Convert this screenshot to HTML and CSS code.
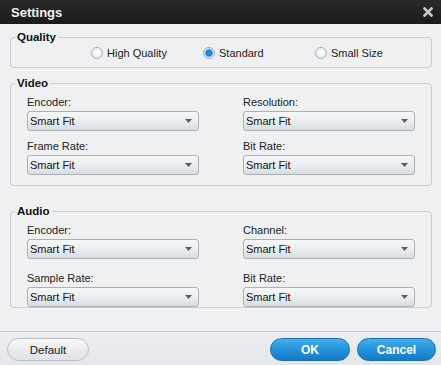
FILE: index.html
```html
<!DOCTYPE html>
<html lang="en">
<head>
  <meta charset="UTF-8">
  <title>Settings</title>
  <link rel="stylesheet" href="styles.css">
</head>
<body>
  <div class="dialog">
    <div class="titlebar">
      <span class="title">Settings</span>
      <svg class="close" width="10" height="10" viewBox="0 0 10 10">
        <path d="M1.5 1.5 L8.5 8.5 M8.5 1.5 L1.5 8.5" stroke="#c9c9c9" stroke-width="2.6" stroke-linecap="square"/>
      </svg>
    </div>

    <div class="content">
      <fieldset class="group quality">
        <legend>Quality</legend>
        <div class="radio-row">
          <label class="radio"><span class="dot"></span>High Quality</label>
          <label class="radio"><span class="dot checked"></span>Standard</label>
          <label class="radio"><span class="dot"></span>Small Size</label>
        </div>
      </fieldset>

      <fieldset class="group video">
        <legend>Video</legend>
        <div class="fields">
          <div class="field">
            <div class="field-label">Encoder:</div>
            <div class="select"><span>Smart Fit</span><svg width="7" height="4" viewBox="0 0 7 4"><polygon points="0,0 7,0 3.5,4" fill="#5a5e63"/></svg></div>
          </div>
          <div class="field">
            <div class="field-label">Resolution:</div>
            <div class="select"><span>Smart Fit</span><svg width="7" height="4" viewBox="0 0 7 4"><polygon points="0,0 7,0 3.5,4" fill="#5a5e63"/></svg></div>
          </div>
          <div class="field">
            <div class="field-label">Frame Rate:</div>
            <div class="select"><span>Smart Fit</span><svg width="7" height="4" viewBox="0 0 7 4"><polygon points="0,0 7,0 3.5,4" fill="#5a5e63"/></svg></div>
          </div>
          <div class="field">
            <div class="field-label">Bit Rate:</div>
            <div class="select"><span>Smart Fit</span><svg width="7" height="4" viewBox="0 0 7 4"><polygon points="0,0 7,0 3.5,4" fill="#5a5e63"/></svg></div>
          </div>
        </div>
      </fieldset>

      <fieldset class="group audio">
        <legend>Audio</legend>
        <div class="fields">
          <div class="field">
            <div class="field-label">Encoder:</div>
            <div class="select"><span>Smart Fit</span><svg width="7" height="4" viewBox="0 0 7 4"><polygon points="0,0 7,0 3.5,4" fill="#5a5e63"/></svg></div>
          </div>
          <div class="field">
            <div class="field-label">Channel:</div>
            <div class="select"><span>Smart Fit</span><svg width="7" height="4" viewBox="0 0 7 4"><polygon points="0,0 7,0 3.5,4" fill="#5a5e63"/></svg></div>
          </div>
          <div class="field">
            <div class="field-label">Sample Rate:</div>
            <div class="select"><span>Smart Fit</span><svg width="7" height="4" viewBox="0 0 7 4"><polygon points="0,0 7,0 3.5,4" fill="#5a5e63"/></svg></div>
          </div>
          <div class="field">
            <div class="field-label">Bit Rate:</div>
            <div class="select"><span>Smart Fit</span><svg width="7" height="4" viewBox="0 0 7 4"><polygon points="0,0 7,0 3.5,4" fill="#5a5e63"/></svg></div>
          </div>
        </div>
      </fieldset>
    </div>

    <div class="footer">
      <button class="btn btn-default">Default</button>
      <div class="actions">
        <button class="btn btn-blue">OK</button>
        <button class="btn btn-blue">Cancel</button>
      </div>
    </div>
  </div>
</body>
</html>
```

FILE: styles.css
```css
body {
  margin: 0;
  font-family: "Liberation Sans", Arial, sans-serif;
  font-size: 11px;
  color: #1a1a1a;
  background: #eef0f2;
}
.dialog {
  width: 441px;
  height: 365px;
  display: flex;
  flex-direction: column;
  background: #eef0f2;
}
.titlebar {
  height: 24px;
  flex: none;
  display: flex;
  align-items: center;
  justify-content: space-between;
  padding: 0 8px 0 11px;
  background: linear-gradient(#2a2a2a, #1b1b1b);
}
.title {
  color: #f2f2f2;
  font-weight: bold;
  font-size: 13px;
}
.close {
  display: block;
}
.content {
  flex: 1;
  padding: 6px 9px 0 10px;
}
.group {
  margin: 0;
  border: 1px solid #c8ccd1;
  border-radius: 4px;
  padding: 0 4px;
  min-width: 0;
}
.group legend {
  padding: 0 2px;
  font-weight: bold;
  font-size: 11.5px;
  line-height: 14px;
  color: #111;
}
.quality {
  padding-bottom: 7px;
}
.radio-row {
  display: flex;
  margin-top: 2px;
  padding-left: 76px;
  line-height: 14px;
}
.radio {
  width: 113px;
  display: flex;
  align-items: center;
  gap: 4px;
  color: #222;
}
.dot {
  width: 12px;
  height: 12px;
  box-sizing: border-box;
  border-radius: 50%;
  border: 1px solid #a9aeb4;
  background: radial-gradient(circle at 50% 40%, #ffffff, #e2e5e9);
}
.dot.checked {
  border-color: #8fa9c4;
  background: radial-gradient(circle, #2b8fe0 0, #1f78c9 3px, #a9d2f2 4px, #f4f8fb 5px);
}
.video {
  margin-top: 8px;
  padding-bottom: 10px;
}
.audio {
  margin-top: 18px;
  padding-bottom: 0;
}
.fields {
  display: grid;
  grid-template-columns: 1fr 1fr;
  column-gap: 44px;
  row-gap: 8px;
  padding: 5px 12px 0;
}
.audio .fields {
  row-gap: 12px;
}
.field-label {
  line-height: 14px;
  margin-bottom: 2px;
  color: #222;
}
.select {
  height: 20px;
  box-sizing: border-box;
  border: 1px solid #abb0b6;
  border-radius: 3px;
  background: linear-gradient(#f6f7f9, #eceef1 45%, #d9dde2);
  display: flex;
  align-items: center;
  justify-content: space-between;
  padding: 0 6px 0 2px;
  color: #111;
}
.select svg {
  display: block;
}
.footer {
  height: 34px;
  flex: none;
  box-sizing: border-box;
  border-top: 1px solid #c6cacf;
  background: linear-gradient(#eceef1, #e4e7ea);
  display: flex;
  align-items: flex-start;
  justify-content: space-between;
  padding: 6px 5px 0 7px;
}
.actions {
  display: flex;
  gap: 7px;
}
.btn {
  height: 23px;
  border-radius: 12px;
  font-family: "Liberation Sans", Arial, sans-serif;
  padding: 0;
  cursor: pointer;
}
.btn-default {
  width: 82px;
  border: 1px solid #b8bcc1;
  background: linear-gradient(#f8f9fa, #e9ebee 50%, #dfe2e6);
  color: #1a1a1a;
  font-size: 11.5px;
}
.btn-blue {
  width: 80px;
  border: 1px solid #1b6eae;
  background: linear-gradient(#45b0ec, #2492dc 50%, #1679c8);
  color: #ffffff;
  font-weight: bold;
  font-size: 12px;
}
.btn-blue:last-child {
  width: 79px;
}
```
